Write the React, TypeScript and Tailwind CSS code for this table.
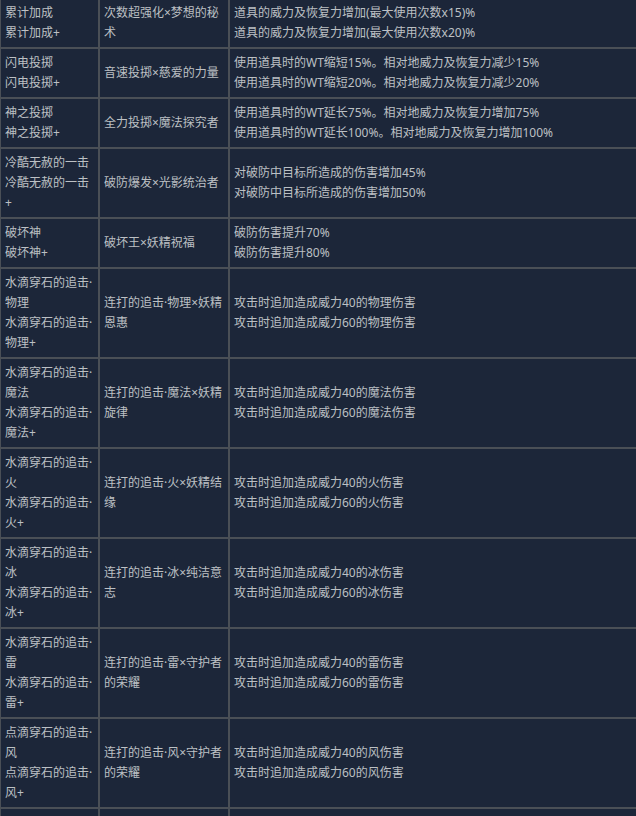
import React from "react";

type Row = {
  name: string[];
  combo: string[];
  effect: string[];
};

const rows: Row[] = [
  {
    name: ["累计加成", "累计加成+"],
    combo: ["次数超强化×梦想的秘", "术"],
    effect: [
      "道具的威力及恢复力增加(最大使用次数x15)%",
      "道具的威力及恢复力增加(最大使用次数x20)%",
    ],
  },
  {
    name: ["闪电投掷", "闪电投掷+"],
    combo: ["音速投掷×慈爱的力量"],
    effect: [
      "使用道具时的WT缩短15%。相对地威力及恢复力减少15%",
      "使用道具时的WT缩短20%。相对地威力及恢复力减少20%",
    ],
  },
  {
    name: ["神之投掷", "神之投掷+"],
    combo: ["全力投掷×魔法探究者"],
    effect: [
      "使用道具时的WT延长75%。相对地威力及恢复力增加75%",
      "使用道具时的WT延长100%。相对地威力及恢复力增加100%",
    ],
  },
  {
    name: ["冷酷无赦的一击", "冷酷无赦的一击", "+"],
    combo: ["破防爆发×光影统治者"],
    effect: ["对破防中目标所造成的伤害增加45%", "对破防中目标所造成的伤害增加50%"],
  },
  {
    name: ["破坏神", "破坏神+"],
    combo: ["破坏王×妖精祝福"],
    effect: ["破防伤害提升70%", "破防伤害提升80%"],
  },
  {
    name: ["水滴穿石的追击·", "物理", "水滴穿石的追击·", "物理+"],
    combo: ["连打的追击·物理×妖精", "恩惠"],
    effect: ["攻击时追加造成威力40的物理伤害", "攻击时追加造成威力60的物理伤害"],
  },
  {
    name: ["水滴穿石的追击·", "魔法", "水滴穿石的追击·", "魔法+"],
    combo: ["连打的追击·魔法×妖精", "旋律"],
    effect: ["攻击时追加造成威力40的魔法伤害", "攻击时追加造成威力60的魔法伤害"],
  },
  {
    name: ["水滴穿石的追击·", "火", "水滴穿石的追击·", "火+"],
    combo: ["连打的追击·火×妖精结", "缘"],
    effect: ["攻击时追加造成威力40的火伤害", "攻击时追加造成威力60的火伤害"],
  },
  {
    name: ["水滴穿石的追击·", "冰", "水滴穿石的追击·", "冰+"],
    combo: ["连打的追击·冰×纯洁意", "志"],
    effect: ["攻击时追加造成威力40的冰伤害", "攻击时追加造成威力60的冰伤害"],
  },
  {
    name: ["水滴穿石的追击·", "雷", "水滴穿石的追击·", "雷+"],
    combo: ["连打的追击·雷×守护者", "的荣耀"],
    effect: ["攻击时追加造成威力40的雷伤害", "攻击时追加造成威力60的雷伤害"],
  },
  {
    name: ["点滴穿石的追击·", "风", "点滴穿石的追击·", "风+"],
    combo: ["连打的追击·风×守护者", "的荣耀"],
    effect: ["攻击时追加造成威力40的风伤害", "攻击时追加造成威力60的风伤害"],
  },
];

const Lines = ({ lines }: { lines: string[] }) => (
  <>
    {lines.map((l, i) => (
      <div key={i} className="whitespace-nowrap">
        {l}
      </div>
    ))}
  </>
);

const cell =
  "border-2 border-[#4a4f56] px-[4px] py-[4px] align-middle text-left";

export default function App() {
  return (
    <div
      className="h-[816px] w-[636px] overflow-hidden bg-[#1c2639]"
      style={{ fontFamily: '"Noto Sans", "Noto Sans CJK SC", sans-serif' }}
    >
      <table className="-ml-[1px] -mt-[3px] w-[660px] table-fixed border-collapse text-[12px] leading-[20px] text-[#bcc0c4]">
        <colgroup>
          <col className="w-[99px]" />
          <col className="w-[130px]" />
          <col />
        </colgroup>
        <tbody>
          {rows.map((r, i) => (
            <tr key={i}>
              <td className={cell}>
                <Lines lines={r.name} />
              </td>
              <td className={cell}>
                <Lines lines={r.combo} />
              </td>
              <td className={cell}>
                <Lines lines={r.effect} />
              </td>
            </tr>
          ))}
          {/* next row starts right at the bottom edge, content not visible */}
          <tr>
            <td className={`${cell} h-[90px]`} />
            <td className={cell} />
            <td className={cell} />
          </tr>
        </tbody>
      </table>
    </div>
  );
}
